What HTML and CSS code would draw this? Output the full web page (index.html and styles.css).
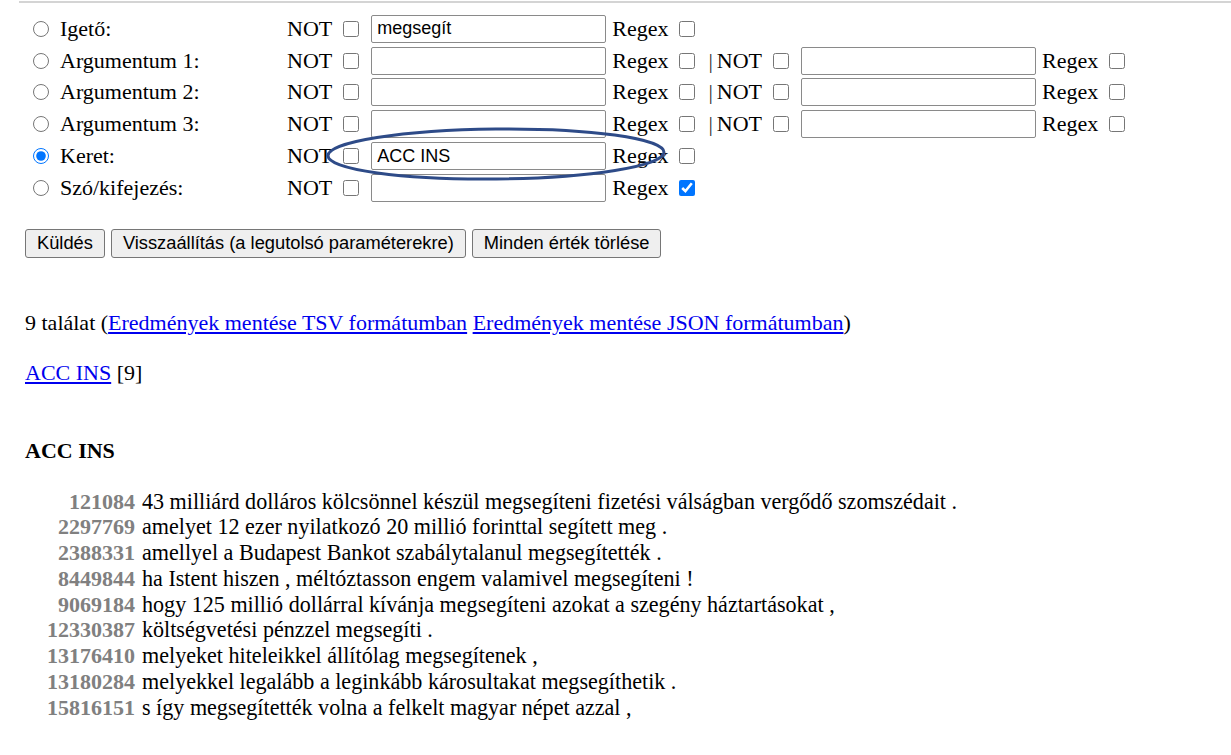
FILE: index.html
```html
<!DOCTYPE html>
<html lang="hu">
<head>
<meta charset="utf-8">
<title>Keresés</title>
<link rel="stylesheet" href="styles.css">
</head>
<body>
<div class="page">
  <div class="topline"></div>
  <form class="form">
    <div class="row">
      <label class="sel"><input class="radio" type="radio" name="t"><span>Igető:</span></label>
      <span class="not">NOT</span><input class="cb" type="checkbox">
      <input class="txt" type="text" value="megsegít">
      <span class="rx">Regex</span><input class="cb" type="checkbox">
    </div>
    <div class="row">
      <label class="sel"><input class="radio" type="radio" name="t"><span>Argumentum 1:</span></label>
      <span class="not">NOT</span><input class="cb" type="checkbox">
      <input class="txt" type="text">
      <span class="rx">Regex</span><input class="cb" type="checkbox">
      <span class="pipe">|</span><span class="not not2">NOT</span><input class="cb" type="checkbox">
      <input class="txt" type="text">
      <span class="rx">Regex</span><input class="cb" type="checkbox">
    </div>
    <div class="row">
      <label class="sel"><input class="radio" type="radio" name="t"><span>Argumentum 2:</span></label>
      <span class="not">NOT</span><input class="cb" type="checkbox">
      <input class="txt" type="text">
      <span class="rx">Regex</span><input class="cb" type="checkbox">
      <span class="pipe">|</span><span class="not not2">NOT</span><input class="cb" type="checkbox">
      <input class="txt" type="text">
      <span class="rx">Regex</span><input class="cb" type="checkbox">
    </div>
    <div class="row">
      <label class="sel"><input class="radio" type="radio" name="t"><span>Argumentum 3:</span></label>
      <span class="not">NOT</span><input class="cb" type="checkbox">
      <input class="txt" type="text">
      <span class="rx">Regex</span><input class="cb" type="checkbox">
      <span class="pipe">|</span><span class="not not2">NOT</span><input class="cb" type="checkbox">
      <input class="txt" type="text">
      <span class="rx">Regex</span><input class="cb" type="checkbox">
    </div>
    <div class="row">
      <label class="sel"><input class="radio" type="radio" name="t" checked><span>Keret:</span></label>
      <span class="not">NOT</span><input class="cb" type="checkbox">
      <input class="txt" type="text" value="ACC INS">
      <span class="rx">Regex</span><input class="cb" type="checkbox">
    </div>
    <div class="row">
      <label class="sel"><input class="radio" type="radio" name="t"><span>Szó/kifejezés:</span></label>
      <span class="not">NOT</span><input class="cb" type="checkbox">
      <input class="txt" type="text">
      <span class="rx">Regex</span><input class="cb" type="checkbox" checked>
    </div>
    <div class="buttons">
      <button type="button" class="btn">Küldés</button>
      <button type="button" class="btn">Visszaállítás (a legutolsó paraméterekre)</button>
      <button type="button" class="btn">Minden érték törlése</button>
    </div>
  </form>
  <p class="count">9 találat (<a href="#">Eredmények mentése TSV formátumban</a> <a href="#">Eredmények mentése JSON formátumban</a>)</p>
  <p class="frames"><a href="#">ACC INS</a> [9]</p>
  <h4 class="head">ACC INS</h4>
  <div class="results">
    <span class="num">121084</span><span class="sent">43 milliárd dolláros kölcsönnel készül megsegíteni fizetési válságban vergődő szomszédait .</span>
    <span class="num">2297769</span><span class="sent">amelyet 12 ezer nyilatkozó 20 millió forinttal segített meg .</span>
    <span class="num">2388331</span><span class="sent">amellyel a Budapest Bankot szabálytalanul megsegítették .</span>
    <span class="num">8449844</span><span class="sent">ha Istent hiszen , méltóztasson engem valamivel megsegíteni !</span>
    <span class="num">9069184</span><span class="sent">hogy 125 millió dollárral kívánja megsegíteni azokat a szegény háztartásokat ,</span>
    <span class="num">12330387</span><span class="sent">költségvetési pénzzel megsegíti .</span>
    <span class="num">13176410</span><span class="sent">melyeket hiteleikkel állítólag megsegítenek ,</span>
    <span class="num">13180284</span><span class="sent">melyekkel legalább a leginkább károsultakat megsegíthetik .</span>
    <span class="num">15816151</span><span class="sent">s így megsegítették volna a felkelt magyar népet azzal ,</span>
  </div>
  <svg class="mark" width="360" height="70" viewBox="0 0 360 70">
    <ellipse cx="170" cy="36" rx="168" ry="25" transform="rotate(-0.6 170 36)" fill="none" stroke="#2e4b88" stroke-width="3"/>
  </svg>
</div>
</body>
</html>
```
FILE: styles.css
```css
html, body {
  margin: 0;
  padding: 0;
  background: #ffffff;
}

body {
  font-family: "Liberation Serif", "Times New Roman", serif;
  font-size: 22px;
  color: #000000;
}

.page {
  position: relative;
  padding-left: 25px;
  min-height: 755px;
  box-sizing: border-box;
}

.topline {
  position: absolute;
  top: 1px;
  left: 19px;
  right: 0;
  height: 2px;
  background: #d4d4d4;
}

.form {
  padding-top: 13px;
  display: flex;
  flex-direction: column;
}

.row {
  display: flex;
  align-items: center;
  height: 31.8px;
  white-space: nowrap;
}

.sel {
  display: flex;
  align-items: center;
  width: 262px;
}

.radio {
  width: 16px;
  height: 16px;
  margin: 0 11px 0 8px;
}

.cb {
  width: 16px;
  height: 16px;
  margin: 0 0 0 11px;
  flex: none;
}

.txt {
  box-sizing: border-box;
  width: 235px;
  height: 28px;
  margin-left: 12px;
  padding: 0 5px;
  border: 1px solid #8a8a8a;
  border-radius: 2px;
  font-family: "Liberation Sans", Arial, sans-serif;
  font-size: 18px;
  color: #000000;
  background: #ffffff;
  flex: none;
}

.rx {
  margin-left: 6px;
}

.pipe {
  margin-left: 13px;
  color: #333333;
}

.not2 {
  margin-left: 4px;
}

.buttons {
  display: flex;
  gap: 6px;
  margin-top: 25px;
}

.btn {
  height: 29px;
  padding: 0 11px;
  border: 1px solid #767676;
  border-radius: 3px;
  background: #efefef;
  font-family: "Liberation Sans", Arial, sans-serif;
  font-size: 18.3px;
  color: #000000;
}

.count {
  margin: 52px 0 0;
  line-height: 25.3px;
}

.frames {
  margin: 25px 0 0;
  line-height: 25.3px;
}

a {
  color: #0000ee;
}

.head {
  margin: 53px 0 0;
  font-size: 22px;
  font-weight: bold;
  line-height: 25.3px;
}

.results {
  margin-top: 25px;
  display: grid;
  grid-template-columns: 110px auto;
  column-gap: 7px;
  line-height: 25.75px;
  justify-content: start;
}

.sent {
  font-size: 22.1px;
}

.num {
  text-align: right;
  font-weight: bold;
  color: #808080;
}

.mark {
  position: absolute;
  left: 326px;
  top: 118px;
}
```
